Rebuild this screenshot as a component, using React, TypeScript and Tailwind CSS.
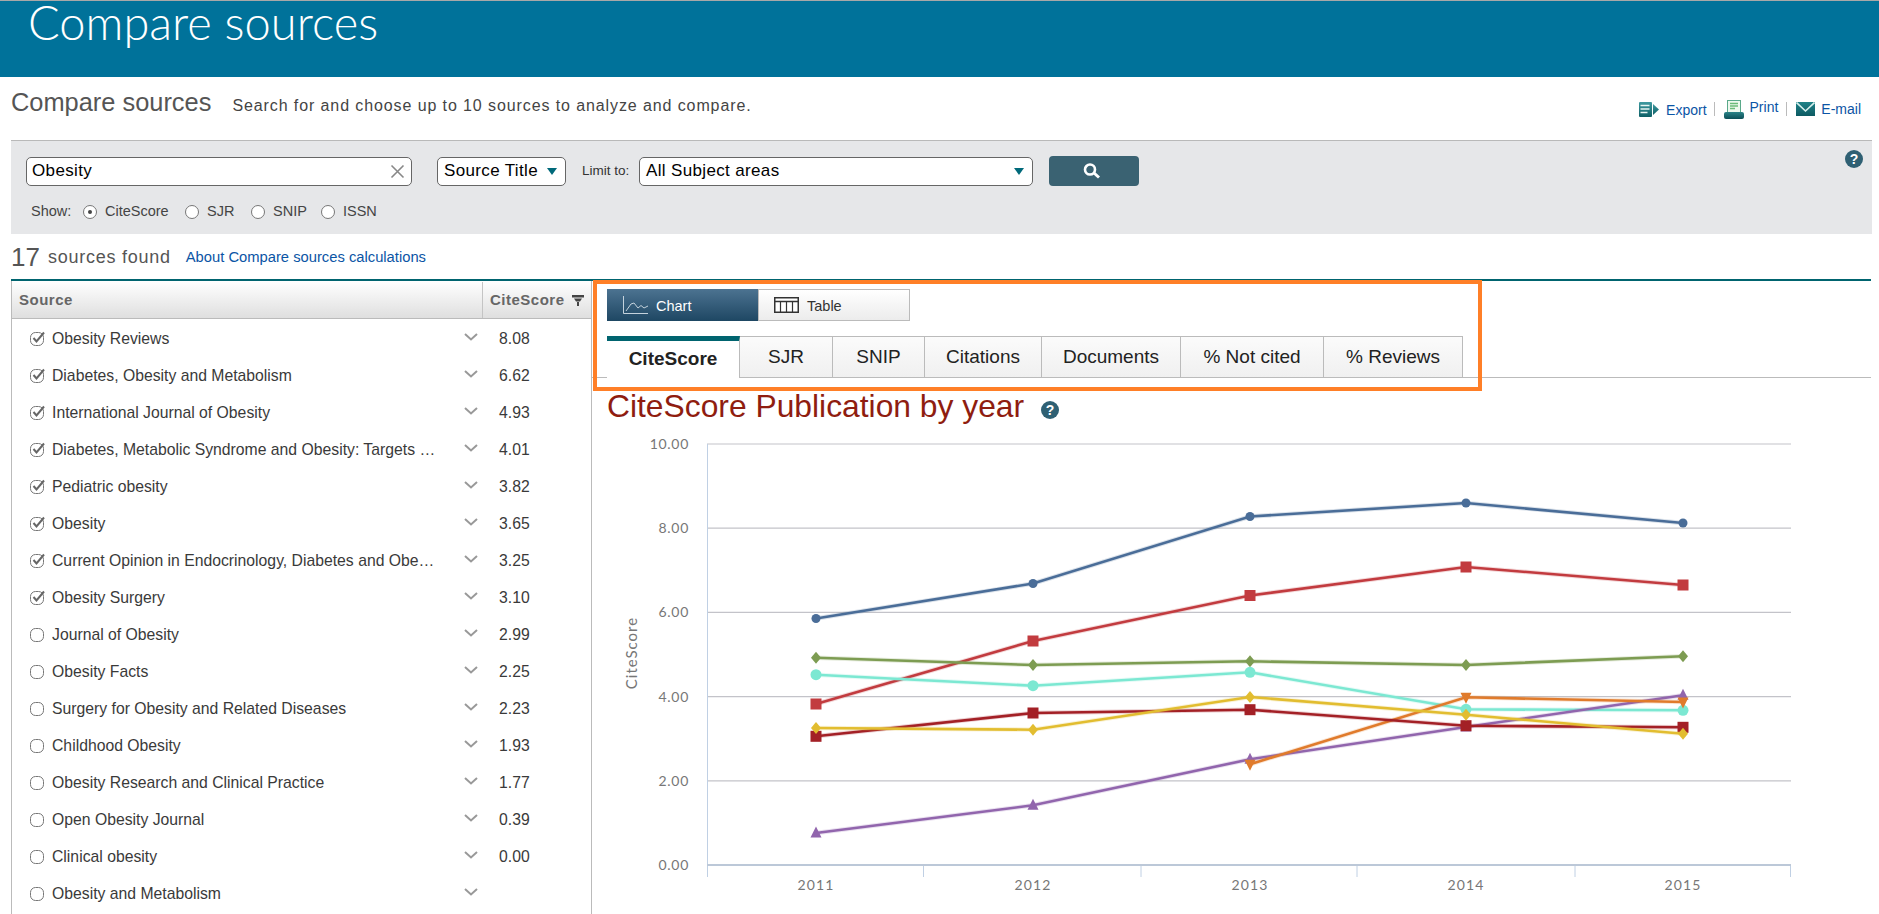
import React from "react";

const rows: [string, string, boolean][] = [
  ["Obesity Reviews", "8.08", true],
  ["Diabetes, Obesity and Metabolism", "6.62", true],
  ["International Journal of Obesity", "4.93", true],
  ["Diabetes, Metabolic Syndrome and Obesity: Targets …", "4.01", true],
  ["Pediatric obesity", "3.82", true],
  ["Obesity", "3.65", true],
  ["Current Opinion in Endocrinology, Diabetes and Obe…", "3.25", true],
  ["Obesity Surgery", "3.10", true],
  ["Journal of Obesity", "2.99", false],
  ["Obesity Facts", "2.25", false],
  ["Surgery for Obesity and Related Diseases", "2.23", false],
  ["Childhood Obesity", "1.93", false],
  ["Obesity Research and Clinical Practice", "1.77", false],
  ["Open Obesity Journal", "0.39", false],
  ["Clinical obesity", "0.00", false],
  ["Obesity and Metabolism", "", false],
];

const xs = [816, 1033, 1250, 1466, 1683];
const years = ["2011", "2012", "2013", "2014", "2015"];
type Shape = "circle" | "square" | "diamond" | "up" | "down";
const series: { c: string; s: Shape; r: number; y: (number | null)[] }[] = [
  { c: "#4a6d98", s: "circle", r: 4.5, y: [618.5, 583.5, 516.5, 503, 523] },
  { c: "#c23b3f", s: "square", r: 5.5, y: [704, 641, 595.5, 567, 585] },
  { c: "#7d9c52", s: "diamond", r: 5, y: [657.7, 665, 661.3, 665, 656.3] },
  { c: "#7ce8d2", s: "circle", r: 5.5, y: [674.7, 685.7, 672.3, 709.3, 710.3] },
  { c: "#9165ad", s: "up", r: 5.5, y: [833, 805.3, 759.3, 727, 695.3] },
  { c: "#e07b2c", s: "down", r: 5.5, y: [null, null, 764.3, 697.3, 702] },
  { c: "#a32026", s: "square", r: 5.5, y: [736.3, 713, 709.7, 725.7, 727.3] },
  { c: "#e2bd30", s: "diamond", r: 5, y: [728, 729.7, 697, 714.7, 733.7] },
];

function Marker({ x, y, s, r, c }: { x: number; y: number; s: Shape; r: number; c: string }) {
  if (s === "circle") return <circle cx={x} cy={y} r={r} fill={c} />;
  if (s === "square") return <rect x={x - r} y={y - r} width={r * 2} height={r * 2} fill={c} />;
  if (s === "diamond") return <polygon points={`${x},${y - r - 1} ${x + r},${y} ${x},${y + r + 1} ${x - r},${y}`} fill={c} />;
  if (s === "up") return <polygon points={`${x},${y - r - 1} ${x + r},${y + r - 1} ${x - r},${y + r - 1}`} fill={c} />;
  return <polygon points={`${x},${y + r + 1} ${x + r},${y - r + 1} ${x - r},${y - r + 1}`} fill={c} />;
}

function Chart() {
  const gy = [865, 780.8, 696.6, 612.4, 528.2, 444];
  const labels = ["0.00", "2.00", "4.00", "6.00", "8.00", "10.00"];
  const font = { fontFamily: "Lato, sans-serif" };
  return (
    <svg viewBox="592 430 1279 484" width={1279} height={484} className="block">
      {gy.slice(1).map((y) => (
        <line key={y} x1={707} x2={1791} y1={y} y2={y} stroke="#c3c3c9" strokeWidth={1.2} />
      ))}
      <line x1={707.5} x2={707.5} y1={444} y2={877} stroke="#c0d0e4" strokeWidth={1} />
      {[923.5, 1141, 1357, 1575, 1790.5].map((x) => (
        <line key={x} x1={x} x2={x} y1={865} y2={877} stroke="#c0d0e4" strokeWidth={1} />
      ))}
      <line x1={707} x2={1791} y1={865} y2={865} stroke="#bcc8d8" strokeWidth={2} />
      {gy.map((y, i) => (
        <text key={y} x={689} y={y + 5} textAnchor="end" fontSize={14} fill="#777" style={font} letterSpacing={0.7}>
          {labels[i]}
        </text>
      ))}
      {years.map((t, i) => (
        <text key={t} x={xs[i]} y={890} textAnchor="middle" fontSize={14} fill="#777" style={font} letterSpacing={1.1}>
          {t}
        </text>
      ))}
      <text transform="translate(637,653) rotate(-90)" textAnchor="middle" fontSize={15} fill="#777" style={font} letterSpacing={1}>
        CiteScore
      </text>
      {series.map((d) => {
        const pts = d.y.map((y, i) => (y === null ? null : `${xs[i]},${y}`)).filter(Boolean).join(" ");
        return (
          <g key={d.c}>
            <polyline points={pts} fill="none" stroke={d.c} strokeWidth={4.5} strokeOpacity={0.2} />
            <polyline points={pts} fill="none" stroke={d.c} strokeWidth={2.6} />
            {d.y.map((y, i) => (y === null ? null : <Marker key={i} x={xs[i]} y={y} s={d.s} r={d.r} c={d.c} />))}
          </g>
        );
      })}
    </svg>
  );
}

function Help() {
  return (
    <span className="flex h-[18px] w-[18px] items-center justify-center rounded-full bg-[#2f6073] text-[14px] leading-none font-bold text-white">?</span>
  );
}

function Radio({ on = false }: { on?: boolean }) {
  return (
    <span className="flex h-[14px] w-[14px] items-center justify-center rounded-full border border-[#777] bg-white">
      {on && <span className="h-[4px] w-[4px] rounded-full bg-[#444]" />}
    </span>
  );
}

function Caret() {
  return <span className="h-0 w-0 border-x-[5px] border-t-[7px] border-x-transparent border-t-[#00697a]" />;
}

function Check({ on }: { on: boolean }) {
  return (
    <svg width="17" height="17" viewBox="0 0 17 17" className="shrink-0">
      <rect x="1.5" y="2.5" width="13" height="13" rx="5" fill="#fff" stroke="#777" strokeWidth="1" />
      {on && <path d="M4.5 8 L7.5 11.5 L15 2.5" fill="none" stroke="#666" strokeWidth="2" />}
    </svg>
  );
}

function Chevron() {
  return (
    <svg width="14" height="8" viewBox="0 0 14 8" className="shrink-0">
      <path d="M1 1 L7 6.5 L13 1" fill="none" stroke="#999" strokeWidth="2" />
    </svg>
  );
}

function ExportIcon() {
  return (
    <svg width="20" height="15" viewBox="0 0 20 15">
      <defs>
        <linearGradient id="ex" x1="0" y1="0" x2="0" y2="1"><stop offset="0" stopColor="#3f9aa0" /><stop offset="1" stopColor="#0d5f66" /></linearGradient>
      </defs>
      <rect x="0" y="0" width="13" height="15" rx="1" fill="url(#ex)" />
      <path d="M1.5 3.5h9M1.5 7h9M1.5 10.5h7" stroke="#e6f5f2" strokeWidth="1.5" />
      <path d="M14 2 L20 7.5 L14 13z" fill="url(#ex)" />
    </svg>
  );
}
function PrintIcon() {
  return (
    <svg width="20" height="19" viewBox="0 0 20 19">
      <defs>
        <linearGradient id="pr" x1="0" y1="0" x2="0" y2="1"><stop offset="0" stopColor="#2b8388" /><stop offset="1" stopColor="#0b4f57" /></linearGradient>
      </defs>
      <rect x="3.5" y="0.5" width="13" height="12" fill="#eef8ee" stroke="#5aa98a" />
      <path d="M6 3.5h8M6 6h8M6 8.5h5" stroke="#6cbb7a" strokeWidth="1.4" />
      <rect x="0" y="12" width="20" height="7" rx="2" fill="url(#pr)" />
    </svg>
  );
}
function MailIcon() {
  return (
    <svg width="19" height="14" viewBox="0 0 19 14">
      <defs>
        <linearGradient id="ml" x1="0" y1="0" x2="0" y2="1"><stop offset="0" stopColor="#1f8288" /><stop offset="1" stopColor="#0d5a62" /></linearGradient>
      </defs>
      <rect width="19" height="14" fill="url(#ml)" />
      <path d="M0.5 0.5 L9.5 9 L18.5 0.5" fill="none" stroke="#d5efec" strokeWidth="1.6" />
    </svg>
  );
}
function ChartIcon() {
  return (
    <svg width="25" height="18" viewBox="0 0 25 18">
      <path d="M0.5 0V17.5H25" fill="none" stroke="#c4d2dc" strokeWidth="1" />
      <path d="M3 15 L8 8 L11 7 L15 12 L18 9.5 L21 12 L25 10" fill="none" stroke="#c4d2dc" strokeWidth="1" />
    </svg>
  );
}
function TableIcon() {
  return (
    <svg width="25" height="16" viewBox="0 0 25 16">
      <rect x="0.75" y="0.75" width="23.5" height="14.5" fill="#fff" stroke="#333" strokeWidth="1.5" />
      <path d="M1 4.5H24" stroke="#333" strokeWidth="1.5" />
      <path d="M6.5 4.5V15M12.5 4.5V15M18.5 4.5V15" stroke="#333" strokeWidth="1.2" />
    </svg>
  );
}

const tabs: [string, string][] = [
  ["SJR", "w-[93px]"],
  ["SNIP", "w-[92px]"],
  ["Citations", "w-[117px]"],
  ["Documents", "w-[139px]"],
  ["% Not cited", "w-[143px]"],
  ["% Reviews", "w-[139px]"],
];

export default function App() {
  return (
    <div className="relative h-[914px] w-[1879px] overflow-hidden bg-white font-['Liberation_Sans',Arial,sans-serif] text-[#444]">
      <header className="h-[77px] border-t border-[#a8a8a8] bg-[#00729a] pl-[28px]">
        <h1 className="font-['Lato',sans-serif] text-[47px] leading-[42px] font-light text-white">Compare sources</h1>
      </header>

      <div className="flex h-[63px] items-start justify-between pr-[18px] pl-[11px]">
        <div className="mt-[11px] flex items-baseline">
          <span className="text-[25.4px] leading-[28px] text-[#555]">Compare sources</span>
          <span className="ml-[21px] text-[16px] tracking-[0.9px] text-[#444]">Search for and choose up to 10 sources to analyze and compare.</span>
        </div>
        <div className="mt-[20px] flex items-center text-[14px] text-[#0b55a5]">
          <ExportIcon />
          <span className="mt-[3px] ml-[7px]">Export</span>
          <span className="mr-[9px] ml-[7px] h-[14px] w-px bg-[#bbb]" />
          <PrintIcon />
          <span className="mb-[3px] ml-[6px]">Print</span>
          <span className="mr-[9px] ml-[8px] h-[14px] w-px bg-[#bbb]" />
          <MailIcon />
          <span className="ml-[6px]">E-mail</span>
        </div>
      </div>

      <section className="relative ml-[11px] h-[94px] w-[1861px] border-t border-[#b9b9b9] bg-[#e6e7e9] pl-[15px]">
        <div className="flex items-center pt-[15px]">
          <div className="flex h-[29px] w-[386px] items-center justify-between rounded-[5px] border border-[#666] bg-white pr-[6px] pl-[5px] text-[17px] tracking-[0.35px] text-black">
            <span>Obesity</span>
            <svg width="15" height="15" viewBox="0 0 15 15"><path d="M1.5 1.5 L13.5 13.5 M13.5 1.5 L1.5 13.5" stroke="#888" strokeWidth="1.6" /></svg>
          </div>
          <div className="ml-[25px] flex h-[29px] w-[129px] items-center justify-between rounded-[5px] border border-[#666] bg-white pr-[8px] pl-[6px] text-[17px] tracking-[0.35px] text-black">
            <span>Source Title</span>
            <Caret />
          </div>
          <span className="ml-[16px] w-[57px] text-[13.5px] text-[#333]">Limit to:</span>
          <div className="flex h-[29px] w-[394px] items-center justify-between rounded-[5px] border border-[#666] bg-white pr-[8px] pl-[6px] text-[17px] tracking-[0.35px] text-black">
            <span>All Subject areas</span>
            <Caret />
          </div>
          <button className="ml-[16px] flex h-[30px] w-[90px] items-center justify-center rounded-[4px] bg-[#3a6272] pr-[5px]">
            <svg width="22" height="18" viewBox="0 0 22 18"><circle cx="9" cy="7.5" r="5" fill="none" stroke="#fff" strokeWidth="2.6" /><path d="M13 11 L18 15.5" stroke="#fff" strokeWidth="3" /></svg>
          </button>
        </div>
        <div className="mt-[15px] ml-[5px] flex items-center text-[14.5px] text-[#444]">
          <span className="w-[52px]">Show:</span>
          <Radio on />
          <span className="ml-[8px] w-[80px]">CiteScore</span>
          <Radio />
          <span className="ml-[8px] w-[44px]">SJR</span>
          <Radio />
          <span className="ml-[8px] w-[48px]">SNIP</span>
          <Radio />
          <span className="ml-[8px]">ISSN</span>
        </div>
        <span className="absolute top-[9px] right-[9px]"><Help /></span>
      </section>

      <div className="flex h-[45px] items-center pt-[1px] pl-[11px]">
        <span className="text-[26px] leading-none text-[#555]">17</span>
        <span className="ml-[8px] text-[18px] tracking-[0.75px] text-[#555]">sources found</span>
        <a className="ml-[15px] text-[14.75px] text-[#0b55a5]">About Compare sources calculations</a>
      </div>

      <main className="ml-[11px] flex w-[1860px] border-t-2 border-[#00646f]">
        <div className="h-[640px] w-[581px] shrink-0 border-x border-[#bbb]">
          <div className="flex h-[38px] border-b border-[#bbb] bg-gradient-to-b from-white to-[#dfdfdf] pt-[1px] text-[15px] font-bold tracking-[0.5px] text-[#666]">
            <div className="flex w-[471px] items-center border-r border-[#c4c4c4] pl-[7px]">Source</div>
            <div className="flex flex-1 items-center pl-[7px]">
              <span>CiteScore</span>
              <svg width="12" height="11" viewBox="0 0 12 11" className="ml-[7px] shrink-0"><path d="M0 0H12V2.5H0zM2 3.5H10L8 6.5H4zM5 7H7V11H5z" fill="#444" /></svg>
            </div>
          </div>
          <ul className="pt-[1px]">
            {rows.map(([name, score, on]) => (
              <li key={name} className="flex h-[37px] items-center text-[15.75px] text-[#3a3a3a]">
                <span className="ml-[17px]"><Check on={on} /></span>
                <span className="ml-[6px] w-[412px] truncate">{name}</span>
                <span className="-mt-[4px]"><Chevron /></span>
                <span className="ml-[21px]">{score}</span>
              </li>
            ))}
          </ul>
        </div>

        <div className="relative flex-1">
          <div className="pt-[8px] pl-[15px]">
            <div className="flex h-[32px] w-[303px] text-[14.5px]">
              <div className="flex w-[151px] items-center gap-[8px] bg-gradient-to-b from-[#4c7391] to-[#1e4763] pl-[16px] text-white">
                <ChartIcon /><span className="mt-[3px]">Chart</span>
              </div>
              <div className="flex flex-1 items-center gap-[8px] border border-[#bbb] bg-gradient-to-b from-white to-[#ececec] pl-[15px] text-[#333]">
                <TableIcon /><span className="mt-[3px]">Table</span>
              </div>
            </div>
          </div>
          <div className="mt-[15px] flex h-[42px] border-b border-[#bbb] pl-[15px] text-[19px] text-[#222]">
            <div className="-mb-px flex w-[133px] items-center justify-center border-t-[5px] border-r border-[#bbb] border-t-[#00646f] bg-white font-bold">CiteScore</div>
            {tabs.map(([t, w]) => (
              <div key={t} className={`flex items-center justify-center border-t border-r border-[#bbb] bg-gradient-to-b from-[#fbfbfb] to-[#f0f0f0] pt-[1px] ${w}`}>{t}</div>
            ))}
          </div>
          <div className="flex h-[52px] items-center pt-[6px] pl-[15px]">
            <span className="text-[31.8px] leading-none text-[#8f1d10]">CiteScore Publication by year</span>
            <span className="mt-[6px] ml-[17px]"><Help /></span>
          </div>
          <Chart />
          <div className="absolute top-[-1px] left-[1px] h-[111px] w-[889px] border-4 border-[#ff7f27]" />
        </div>
      </main>
    </div>
  );
}
